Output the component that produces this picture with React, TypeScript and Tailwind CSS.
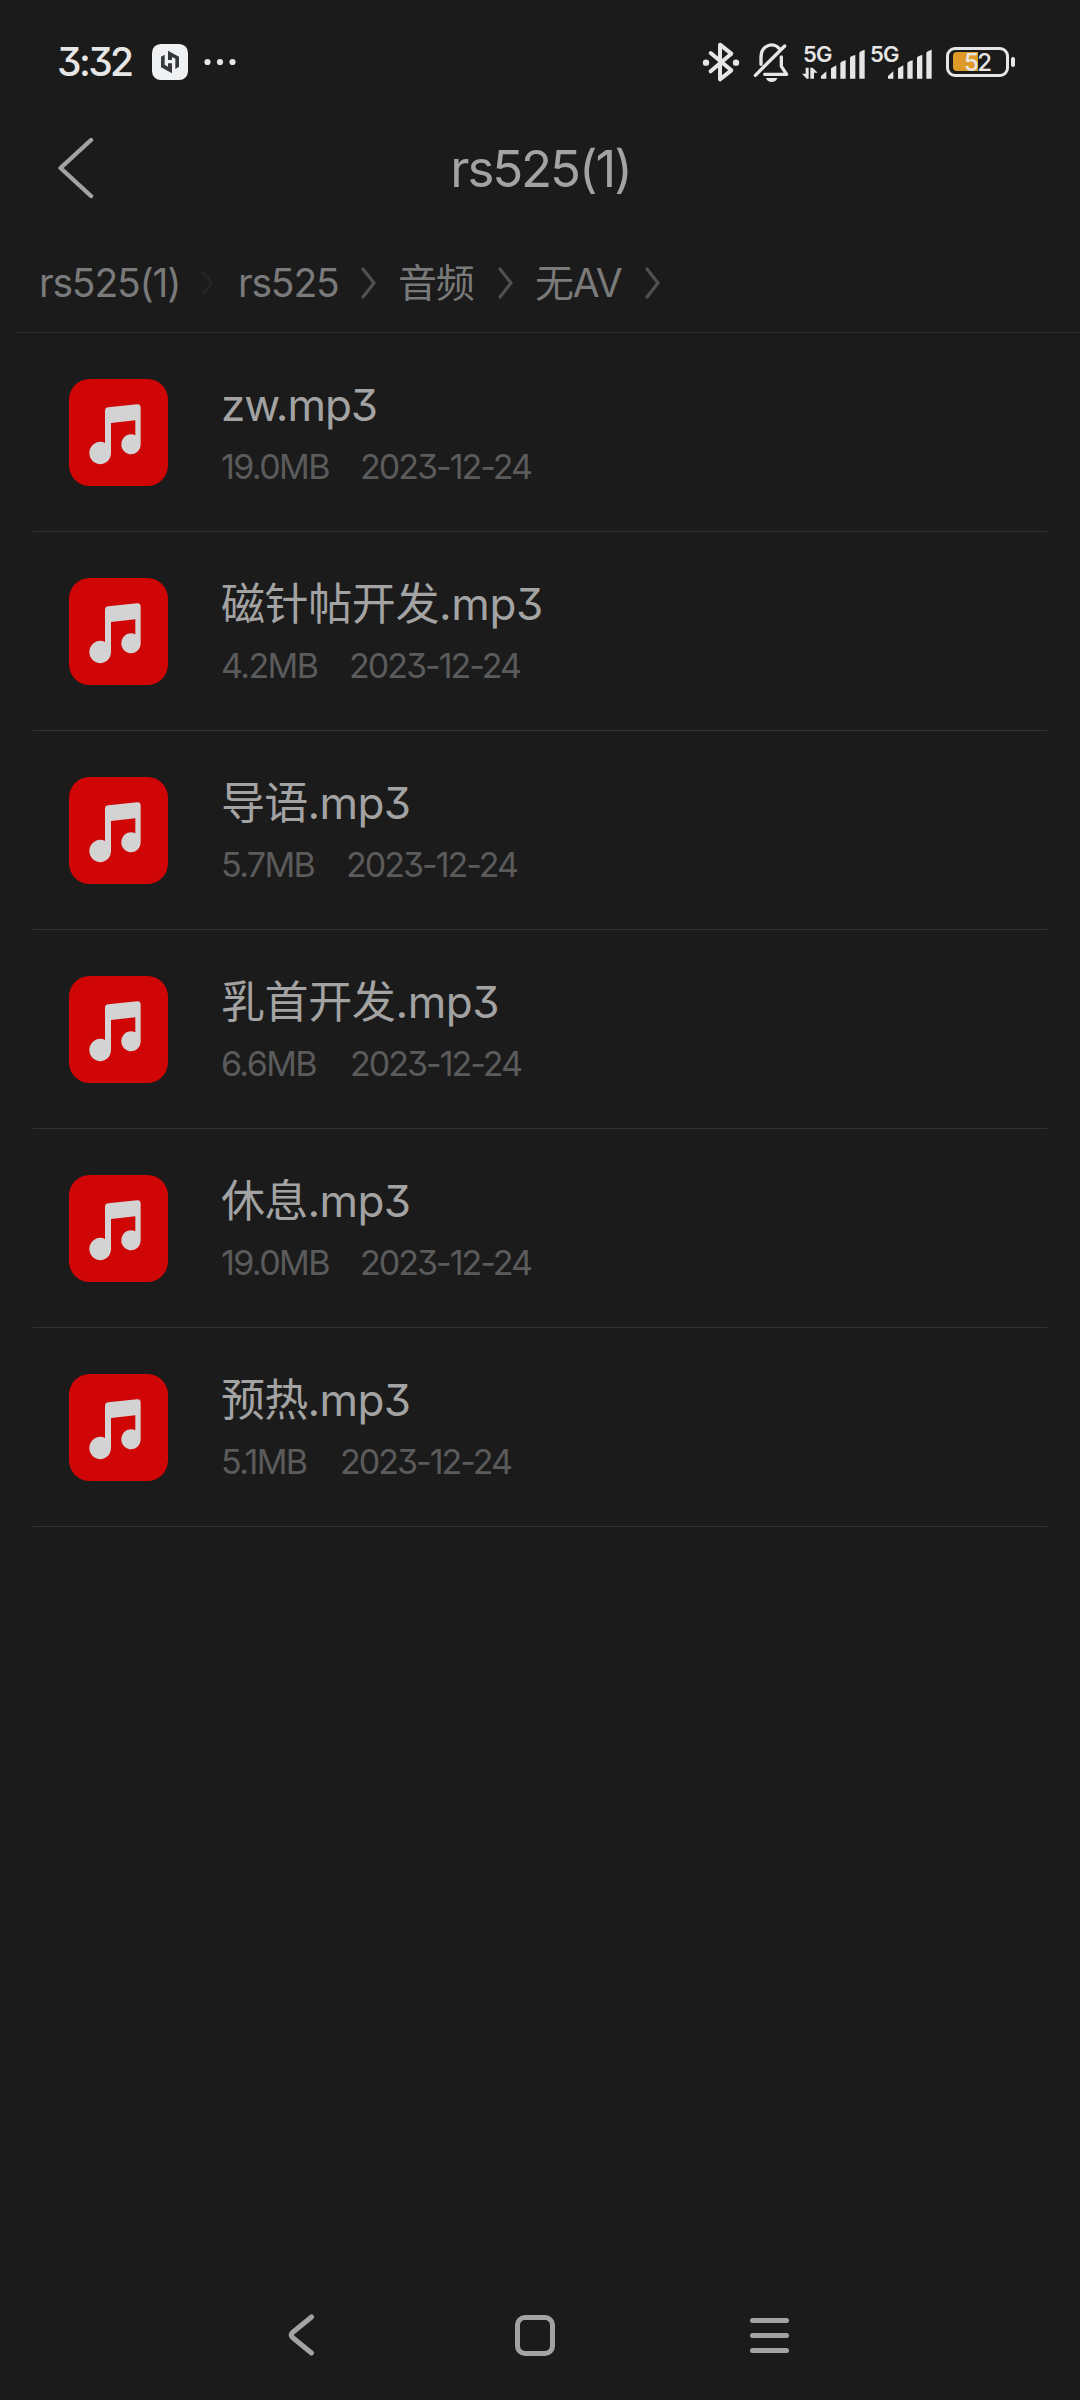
import type { ReactNode } from "react";

interface AudioFile {
  name: string;
  tracking: string;
  size: string;
  sizeWidth: string;
  date: string;
}

const files: AudioFile[] = [
  { name: "zw.mp3", tracking: "tracking-[-1.1px]", size: "19.0MB", sizeWidth: "w-[139px]", date: "2023-12-24" },
  { name: "磁针帖开发.mp3", tracking: "tracking-[-0.4px]", size: "4.2MB", sizeWidth: "w-[128px]", date: "2023-12-24" },
  { name: "导语.mp3", tracking: "tracking-[-0.7px]", size: "5.7MB", sizeWidth: "w-[125px]", date: "2023-12-24" },
  { name: "乳首开发.mp3", tracking: "tracking-[-0.4px]", size: "6.6MB", sizeWidth: "w-[129px]", date: "2023-12-24" },
  { name: "休息.mp3", tracking: "tracking-[-0.7px]", size: "19.0MB", sizeWidth: "w-[139px]", date: "2023-12-24" },
  { name: "预热.mp3", tracking: "tracking-[-0.7px]", size: "5.1MB", sizeWidth: "w-[119px]", date: "2023-12-24" },
];

function StatusBar() {
  return (
    <div className="flex h-[124px] items-center text-[#e6e6e6]">
      <span className="ml-[57px] w-[95px] text-[39px] leading-[40px] font-medium tracking-[-2.6px]">3:32</span>
      <svg className="h-9 w-9" viewBox="0 0 108 108">
        <rect width="108" height="108" rx="26" fill="#f0f1f3" />
        <path d="M27 38 L38 32 V62 L48 68 V58 H60 V88 L27 70 Z" fill="#37383b" />
        <path d="M48 20 L81 38 V68 L70 75 V44 L60 39 V48 H48 Z" fill="#37383b" />
      </svg>
      <svg className="ml-4 h-2 w-8" viewBox="0 0 32 8" fill="currentColor">
        <circle cx="3.5" cy="4" r="3.1" />
        <circle cx="16" cy="4" r="3.1" />
        <circle cx="28.5" cy="4" r="3.1" />
      </svg>

      {/* Bluetooth */}
      <svg className="ml-[466px] h-[42px] w-[38px]" viewBox="66 62 114 126" fill="none" stroke="currentColor" strokeWidth="12" strokeLinecap="round" strokeLinejoin="round">
        <path d="M92 98 L154 150 L120 177 V73 L154 100 L92 153" />
        <circle cx="78" cy="127" r="9.5" fill="currentColor" stroke="none" />
        <circle cx="168" cy="127" r="9.5" fill="currentColor" stroke="none" />
      </svg>
      {/* Muted bell */}
      <svg className="ml-[12px] h-[42px] w-[38px]" viewBox="216 62 114 126" fill="none" stroke="currentColor" strokeWidth="10" strokeLinecap="round" strokeLinejoin="round">
        <path d="M226 165 L314 77" />
        <path d="M243 132 V112 C243 70 284 66 297 84" />
        <path d="M304 110 V138 L320 162 H254" />
        <path d="M258 173 H292 C288 189 262 189 258 173 Z" fill="currentColor" stroke="none" />
      </svg>
      <Signal className="ml-[12px]" data />
      <Signal className="ml-[4px]" />
      <div className="ml-[14px] flex items-center gap-[2px]">
        <div className="relative h-[30px] w-[63px] rounded-[9px] border-[3px] border-[#e6e6e6]">
          <div className="ml-[4px] mt-[2px] h-[19px] w-[25px] rounded-l-[4px] bg-[#dd9a27]" />
          <span className="absolute top-[1px] left-[15px] text-[24px] leading-[23px] font-medium tracking-[-1.5px]">52</span>
        </div>
        <div className="h-[10px] w-[4px] rounded-full bg-[#e6e6e6]" />
      </div>
    </div>
  );
}

function Signal({ className, data = false }: { className: string; data?: boolean }) {
  return (
    <div className={`relative h-[34px] w-[63px] ${className}`}>
      <span className="absolute -top-[1px] left-[1px] text-[22px] leading-[20px] font-semibold tracking-[-0.8px]">5G</span>
      <svg className="h-[34px] w-[63px]" viewBox="367 70 189 102" fill="currentColor">
        {data && (
          <path d="M378 138 H387 V171 H381 L367 156 H378 Z M392 138 H399 L414 153 H403 V171 H392 Z" />
        )}
        <path d="M424 163 L440 149 V171 H424 Z" />
        <path d="M454 140 L470 131 V171 H454 Z" />
        <path d="M482 124 Q484 119 498 116 V171 H482 Z" />
        <path d="M511 108 Q513 103 527 100 V171 H511 Z" />
        <path d="M539 93 Q541 88 555 84 V171 H539 Z" />
      </svg>
    </div>
  );
}

function Header() {
  return (
    <header className="flex h-[88px] items-center">
      <svg className="ml-[56px] h-[62px] w-[40px]" viewBox="0 0 40 62" fill="none" stroke="#a3a3a3" strokeWidth="4.4" strokeLinecap="round" strokeLinejoin="round">
        <path d="M35 3 L4.5 31 L35 59" />
      </svg>
      <h1 className="mr-[95px] flex-1 pt-[2px] text-center text-[51px] leading-[60px] font-normal tracking-[-2.1px] text-[#a3a3a3]">rs525(1)</h1>
    </header>
  );
}

function Crumb({ className, chevron, children }: { className: string; chevron: string; children: ReactNode }) {
  return (
    <div className={`flex items-center ${className}`}>
      <span className="flex-1 whitespace-nowrap">{children}</span>
      <svg className={`h-[32px] w-[15px] ${chevron}`} viewBox="0 0 15 32" fill="none" stroke="currentColor" strokeWidth="3.2" strokeLinecap="round" strokeLinejoin="round">
        <path d="M2 2 L13 16 L2 30" />
      </svg>
    </div>
  );
}

function Breadcrumbs() {
  return (
    <nav className="ml-[17px] flex h-[121px] items-center border-b border-[#2f2f2f] pt-[21px] pl-[22px] text-[39px] leading-[50px] font-normal tracking-[-1.2px] text-[#7a7a7a]">
      <Crumb className="w-[176px]" chevron="scale-75 text-[#262626]">rs525(1)</Crumb>
      <Crumb className="ml-[23px] w-[138px]" chevron="text-[#505050]">rs525</Crumb>
      <Crumb className="ml-[22px] w-[115px]" chevron="text-[#505050]">音频</Crumb>
      <Crumb className="ml-[22px] w-[125px]" chevron="text-[#505050]">无AV</Crumb>
    </nav>
  );
}

function MusicIcon() {
  return (
    <svg className="h-[107px] w-[99px]" viewBox="58 56 297 321">
      <rect x="58" y="56" width="297" height="321" rx="62" fill="#d00505" />
      <path
        d="M166 152 Q166 142 176 141 L262 132 Q273 131 273 142 V252 A29 30 0 1 1 257 225 V180 L184 188 V278 A32.5 33.5 0 1 1 166 248 Z"
        fill="#d3d3d3"
      />
    </svg>
  );
}

function FileRow({ file }: { file: AudioFile }) {
  return (
    <li className="flex h-[199px] items-center border-b border-[#333333] pl-[36px]">
      <MusicIcon />
      <div className="ml-[53px] pt-[4px]">
        <p className={`h-[65px] text-[44px] leading-[62px] font-normal text-[#a3a3a3] ${file.tracking}`}>{file.name}</p>
        <p className="flex h-[56px] text-[34px] leading-[56px] font-normal text-[#5b5b5b]">
          <span className={`tracking-[-1.6px] ${file.sizeWidth}`}>{file.size}</span>
          <span className="tracking-[-2px]">{file.date}</span>
        </p>
      </div>
    </li>
  );
}

function NavBar() {
  return (
    <footer className="flex h-[130px] items-center text-[#a3a3a3]">
      <svg className="ml-[287px] h-[44px] w-[28px]" viewBox="0 0 28 44" fill="none" stroke="currentColor" strokeWidth="5" strokeLinecap="round" strokeLinejoin="round">
        <path d="M24.5 4 L5.5 19.5 Q3 22 5.5 24.5 L24.5 40" />
      </svg>
      <div className="ml-[200px] h-[41px] w-[40px] rounded-[10px] border-[5px] border-current" />
      <div className="ml-[195px] flex w-[39px] flex-col gap-[10px]">
        <div className="h-[5px] rounded-full bg-current" />
        <div className="h-[5px] rounded-full bg-current" />
        <div className="h-[5px] rounded-full bg-current" />
      </div>
    </footer>
  );
}

export default function App() {
  return (
    <div className="flex h-[2400px] w-[1080px] flex-col overflow-hidden bg-[#1b1b1b] font-['Inter','Noto_Sans_CJK_SC',sans-serif] [font-feature-settings:'cv09']">
      <StatusBar />
      <Header />
      <Breadcrumbs />
      <ul className="mr-[33px] ml-[33px] flex-1">
        {files.map((file) => (
          <FileRow key={file.name} file={file} />
        ))}
      </ul>
      <NavBar />
    </div>
  );
}
